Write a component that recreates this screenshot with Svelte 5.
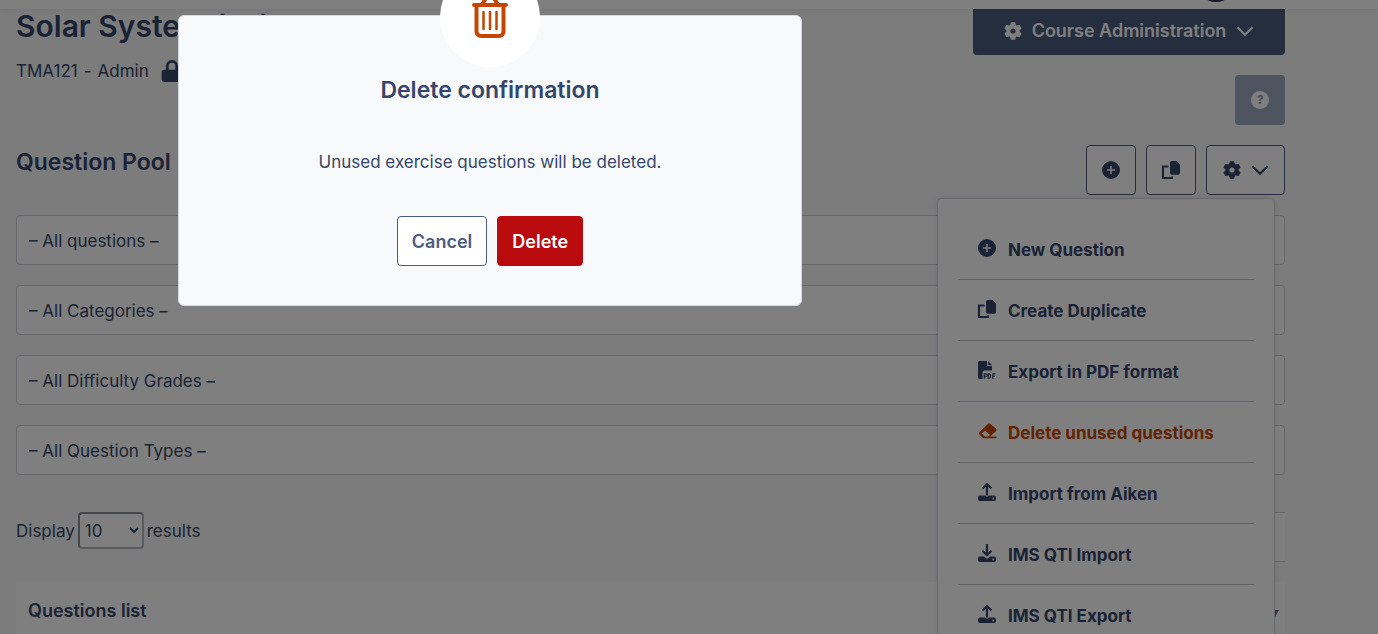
<script lang="ts">
	type IconName =
		| 'plus'
		| 'copy'
		| 'pdf'
		| 'eraser'
		| 'upload'
		| 'download'
		| 'gear'
		| 'chevron'
		| 'lock';

	interface MenuItem {
		icon: IconName;
		label: string;
		danger?: boolean;
	}

	const menuItems: MenuItem[] = [
		{ icon: 'plus', label: 'New Question' },
		{ icon: 'copy', label: 'Create Duplicate' },
		{ icon: 'pdf', label: 'Export in PDF format' },
		{ icon: 'eraser', label: 'Delete unused questions', danger: true },
		{ icon: 'upload', label: 'Import from Aiken' },
		{ icon: 'download', label: 'IMS QTI Import' },
		{ icon: 'upload', label: 'IMS QTI Export' }
	];

	const filters = [
		{ name: 'Exercise', all: '– All questions –' },
		{ name: 'Category', all: '– All Categories –' },
		{ name: 'Difficulty', all: '– All Difficulty Grades –' },
		{ name: 'Question type', all: '– All Question Types –' }
	];

	let menuOpen = $state(true);
	let confirmOpen = $state(true);
	let pageSize = $state('10');

	function pick(item: MenuItem) {
		if (item.danger) confirmOpen = true;
	}
</script>

{#snippet icon(name: IconName)}
	<svg class="icon" viewBox="0 0 18 18" aria-hidden="true">
		{#if name === 'plus'}
			<circle cx="9" cy="9" r="9" />
			<path class="cut" d="M9 5v8M5 9h8" />
		{:else if name === 'copy'}
			<path d="M9.500 0H14.500L18 3.500v8.500a1.800 1.800 0 0 1-1.800 1.800H9.800A1.800 1.800 0 0 1 8 12V1.500A1.500 1.500 0 0 1 9.500 0z" />
			<path class="line" d="M6.500 5.500H1V17h9v-1.500" />
		{:else if name === 'pdf'}
			<path d="M1.500 0H9v5h5v4.500H6.500A2 2 0 0 0 4.500 11.500V18h-3A1.500 1.500 0 0 1 0 16.500v-15A1.500 1.500 0 0 1 1.500 0zM10 0l4 4h-4z" />
			<path
				class="thin"
				d="M6.300 17.800v-5h1.200a1.500 1.500 0 0 1 0 3H6.300M10.300 12.800v4.400h.8c.8 0 1.400-.6 1.400-1.400v-1.600c0-.8-.6-1.400-1.400-1.400zM14.800 17.800v-5h2.700M14.800 15.300h2.200"
			/>
		{:else if name === 'eraser'}
			<path
				fill-rule="evenodd"
				d="M12.400 2a1.800 1.800 0 0 0-2.500 0L1.600 9.900a2 2 0 0 0 0 2.800l3.100 3.100c.4.400.8.500 1.200.5H18.500v-1.900h-6.300l5.700-5.200a1.800 1.800 0 0 0 0-2.600zM6.900 8.500l5 4.400-1.700 1.500H6.500L3.800 11.600z"
			/>
		{:else if name === 'upload'}
			<path class="line" d="M9 12.500V1.500M4.500 5.500L9 1.300l4.500 4.200" />
			<path fill-rule="evenodd" d="M2 12.500h5.200a2 2 0 0 0 3.600 0H16a2 2 0 0 1 2 2V16a2 2 0 0 1-2 2H2a2 2 0 0 1-2-2v-1.500a2 2 0 0 1 2-2zM15.200 14.500a.9.9 0 1 0 0 1.800a.9.9 0 0 0 0-1.800z" />
		{:else if name === 'download'}
			<path class="line" d="M9 0v11M4.500 6.800L9 11.200l4.500-4.400" />
			<path fill-rule="evenodd" d="M2 12.500h4L9 15l3-2.500h4a2 2 0 0 1 2 2V16a2 2 0 0 1-2 2H2a2 2 0 0 1-2-2v-1.500a2 2 0 0 1 2-2zM15.200 14.500a.9.9 0 1 0 0 1.800a.9.9 0 0 0 0-1.800z" />
		{:else if name === 'gear'}
			<path
				class="gear"
				fill-rule="evenodd"
				d="M7.300 0h3.400l.6 2.500 1.400.8 2.500-.7 1.700 2.900-1.900 1.800v1.600l1.900 1.800-1.700 2.900-2.500-.7-1.400.8-.6 2.500H7.300l-.6-2.500-1.400-.8-2.500.7-1.700-2.900L3 8.900V7.300L1.100 5.500l1.700-2.900 2.500.7 1.400-.8zM9 4.900a3.200 3.200 0 1 0 0 6.400a3.200 3.200 0 0 0 0-6.400z"
				transform="translate(0 .9)"
			/>
		{:else if name === 'chevron'}
			<path class="line" d="M1.500 5.200L9 12.700l7.500-7.500" />
		{:else if name === 'lock'}
			<path
				fill-rule="evenodd"
				d="M4 8V5a5 5 0 0 1 10 0v3h1.500a2 2 0 0 1 2 2v6a2 2 0 0 1-2 2h-13a2 2 0 0 1-2-2v-6a2 2 0 0 1 2-2zM6.300 8h5.400V5a2.700 2.700 0 0 0-5.400 0z"
			/>
		{/if}
	</svg>
{/snippet}

<div class="app">
	<header class="topbar"><span class="avatar"></span></header>

	<main class="page">
		<div class="course-row">
			<div class="course">
				<h1>Solar System (xx)</h1>
				<p class="course-info">
					<span>TMA121</span>
					<span>-</span>
					<span>Admin</span>
					<span class="lock">{@render icon('lock')}</span>
				</p>
			</div>
			<button class="admin-btn">
				{@render icon('gear')}
				<span>Course Administration</span>
				{@render icon('chevron')}
			</button>
		</div>

		<div class="help-row">
			<button class="help-btn" aria-label="Help"><span class="help-mark">?</span></button>
		</div>

		<div class="toolbar">
			<h2>Question Pool</h2>
			<div class="tools">
				<button class="tool" aria-label="New Question">{@render icon('plus')}</button>
				<button class="tool" aria-label="Create Duplicate">{@render icon('copy')}</button>
				<button class="tool wide" aria-label="More" onclick={() => (menuOpen = !menuOpen)}>
					{@render icon('gear')}
					{@render icon('chevron')}
				</button>
			</div>
			{#if menuOpen}
				<ul class="menu">
					{#each menuItems as item}
						<li>
							<button class="menu-item" class:danger={item.danger} onclick={() => pick(item)}>
								{@render icon(item.icon)}
								<span>{item.label}</span>
							</button>
						</li>
					{/each}
				</ul>
			{/if}
		</div>

		<div class="filters">
			{#each filters as filter}
				<select class="filter" aria-label={filter.name}>
					<option>{filter.all}</option>
				</select>
			{/each}
		</div>

		<div class="list-controls">
			<label class="page-size">
				<span>Display</span>
				<select bind:value={pageSize}>
					<option>10</option>
					<option>20</option>
				</select>
				<span>results</span>
			</label>
			<input class="search" type="search" aria-label="Search" />
		</div>

		<table class="questions">
			<thead>
				<tr>
					<th>Questions list</th>
					<th class="sort"><span class="sort-arrow"></span></th>
				</tr>
			</thead>
		</table>
	</main>

	{#if confirmOpen}
		<div class="overlay">
			<div class="modal" role="dialog" aria-modal="true" aria-labelledby="confirm-title">
				<div class="modal-icon">
					<svg viewBox="0 0 36 42" aria-hidden="true">
						<path d="M2 9h32M10.500 8l3.500-6h8l3.500 6" />
						<path d="M4.500 9v26.500a4.500 4.500 0 0 0 4.500 4.500h18a4.500 4.500 0 0 0 4.500-4.500V9" />
						<path class="slat" d="M11.500 16v17M18 16v17M24.500 16v17" />
					</svg>
				</div>
				<h3 id="confirm-title">Delete confirmation</h3>
				<p>Unused exercise questions will be deleted.</p>
				<div class="modal-actions">
					<button class="cancel" onclick={() => (confirmOpen = false)}>Cancel</button>
					<button class="delete" onclick={() => (confirmOpen = false)}>Delete</button>
				</div>
			</div>
		</div>
	{/if}
</div>

<style>
	.app {
		--text: #35466a;
		--navy: #4b5c7d;
		--line: #cdd0d8;
		position: relative;
		height: 100vh;
		overflow: hidden;
		background: #f8f8fb;
		color: var(--text);
		font-family: Inter, 'Liberation Sans', sans-serif;
		font-size: 17px;
		line-height: 24px;
	}

	h1,
	h2,
	h3,
	p,
	ul {
		margin: 0;
		padding: 0;
	}

	button,
	select,
	input {
		font: inherit;
		color: inherit;
		box-sizing: border-box;
	}

	button {
		cursor: pointer;
	}

	.icon {
		width: 18px;
		height: 18px;
		flex: none;
		overflow: visible;
		fill: currentColor;
	}

	.icon .line {
		fill: none;
		stroke: currentColor;
		stroke-width: 2.2;
	}

	.icon .thin {
		fill: none;
		stroke: currentColor;
		stroke-width: 1.2;
	}

	.icon .gear {
		stroke: currentColor;
		stroke-width: 1.2;
		stroke-linejoin: round;
	}

	.icon .cut {
		stroke: #fff;
		stroke-width: 1.5;
	}

	.topbar {
		position: absolute;
		z-index: 2;
		top: 0;
		left: 0;
		right: 0;
		height: 9px;
		background: #fff;
		box-shadow: 0 1px 4px rgba(0, 0, 0, 0.06);
	}

	.avatar {
		position: absolute;
		right: 142px;
		bottom: 7px;
		width: 40px;
		height: 40px;
		border-radius: 50%;
		background: #2c2c4c;
	}

	.page {
		padding: 5px 93px 0 16px;
	}

	.course-row {
		display: flex;
		justify-content: space-between;
		align-items: flex-start;
		height: 70px;
	}

	h1 {
		font-size: 30px;
		line-height: 42px;
		font-weight: 600;
	}

	.course-info {
		display: flex;
		align-items: center;
		gap: 6px;
		padding-top: 12px;
	}

	.lock {
		padding-left: 6px;
	}

	.lock .icon {
		display: block;
		width: 22px;
		height: 22px;
	}

	.admin-btn {
		display: flex;
		align-items: center;
		justify-content: center;
		gap: 10px;
		width: 312px;
		height: 50px;
		padding-top: 2px;
		border: none;
		border-radius: 4px;
		background: var(--navy);
		color: #fff;
		font-size: 18px;
		font-weight: 600;
	}

	.help-row {
		display: flex;
		justify-content: flex-end;
	}

	.help-btn {
		display: flex;
		align-items: center;
		justify-content: center;
		width: 50px;
		height: 50px;
		border: none;
		border-radius: 4px;
		background: #9fabc0;
	}

	.help-mark {
		width: 18px;
		height: 18px;
		border-radius: 50%;
		background: #fff;
		color: #8b97b0;
		font-size: 12px;
		line-height: 18px;
		font-weight: 700;
	}

	.toolbar {
		position: relative;
		display: flex;
		justify-content: space-between;
		padding: 20px 0;
	}

	h2 {
		font-size: 23px;
		line-height: 34px;
		font-weight: 600;
	}

	.tools {
		display: flex;
		gap: 10px;
	}

	.tool {
		display: flex;
		align-items: center;
		justify-content: center;
		gap: 10px;
		width: 50px;
		height: 50px;
		padding: 0;
		border: 1px solid var(--navy);
		border-radius: 4px;
		background: #fff;
	}

	.tool.wide {
		width: 79px;
	}

	.menu {
		position: absolute;
		z-index: 1;
		top: 73px;
		right: 10px;
		width: 338px;
		box-sizing: border-box;
		padding: 20px;
		border: 1px solid var(--line);
		border-radius: 4px;
		background: #fff;
		box-shadow: 0 0 8px rgba(0, 0, 0, 0.08);
		list-style: none;
	}

	.menu li {
		border-bottom: 1px solid #c2c5ce;
	}

	.menu-item {
		display: flex;
		align-items: center;
		gap: 12px;
		width: 100%;
		height: 60px;
		padding: 0 20px;
		border: none;
		background: none;
		font-weight: 700;
	}

	.menu-item .icon {
		padding-bottom: 2px;
	}

	.menu-item span {
		padding-top: 2px;
	}

	.menu-item.danger {
		color: #c44601;
	}

	.filters {
		display: grid;
		gap: 20px;
	}

	.filter {
		width: 100%;
		height: 50px;
		padding: 2px 12px 0;
		border: 1px solid var(--line);
		border-radius: 4px;
		background: #fff;
		appearance: none;
	}

	.list-controls {
		display: flex;
		justify-content: space-between;
		align-items: flex-start;
		padding: 37px 0 20px;
	}

	.page-size {
		display: flex;
		align-items: center;
		gap: 3px;
	}

	.page-size select {
		width: 66px;
		height: 37px;
		padding: 0 4px 0 1px;
		border: 2px solid;
		border-color: #8c8f98 #b4b7c0 #b4b7c0 #8c8f98;
		border-radius: 4px;
		background: #fff;
	}

	.search {
		width: 240px;
		height: 50px;
		border: 1px solid var(--line);
		border-right: none;
		background: #fff;
	}

	.questions {
		width: 100%;
		border-collapse: collapse;
		background: #fff;
	}

	.questions th {
		height: 54px;
		padding: 0 12px;
		text-align: left;
		font-size: 18px;
		font-weight: 600;
	}

	.questions .sort {
		padding: 4px 6px 0;
	}

	.sort-arrow {
		display: block;
		margin-left: auto;
		width: 0;
		border: 4px solid transparent;
		border-top: 7px solid #5c68d0;
		border-bottom: none;
	}

	.overlay {
		position: absolute;
		z-index: 3;
		inset: 0;
		padding: 15px 178px;
		background: rgba(0, 0, 0, 0.5);
	}

	.modal {
		display: flex;
		flex-direction: column;
		align-items: center;
		max-width: 624px;
		box-sizing: border-box;
		padding-bottom: 39px;
		border: 1px solid #d5d8e2;
		border-radius: 6px;
		background: #f8f9fb;
	}

	.modal-icon {
		display: flex;
		align-items: center;
		justify-content: center;
		width: 100px;
		height: 100px;
		margin-top: -49px;
		border-radius: 50%;
		background: #fff;
	}

	.modal-icon svg {
		width: 36px;
		height: 42px;
		fill: none;
		stroke: #c44601;
		stroke-width: 4;
		stroke-linecap: round;
	}

	.modal-icon .slat {
		stroke-width: 2.5;
	}

	h3 {
		padding-top: 8px;
		font-size: 23px;
		line-height: 30px;
		font-weight: 600;
	}

	.modal p {
		padding: 45px 0 42px;
	}

	.modal-actions {
		display: flex;
		gap: 10px;
	}

	.modal-actions button {
		height: 50px;
		padding: 2px 14px 0;
		border: 1px solid var(--navy);
		border-radius: 4px;
		background: #fff;
		color: var(--navy);
		font-size: 18px;
		font-weight: 600;
	}

	.modal-actions .delete {
		border-color: #b90a0d;
		background: #b90a0d;
		color: #fff;
	}
</style>
